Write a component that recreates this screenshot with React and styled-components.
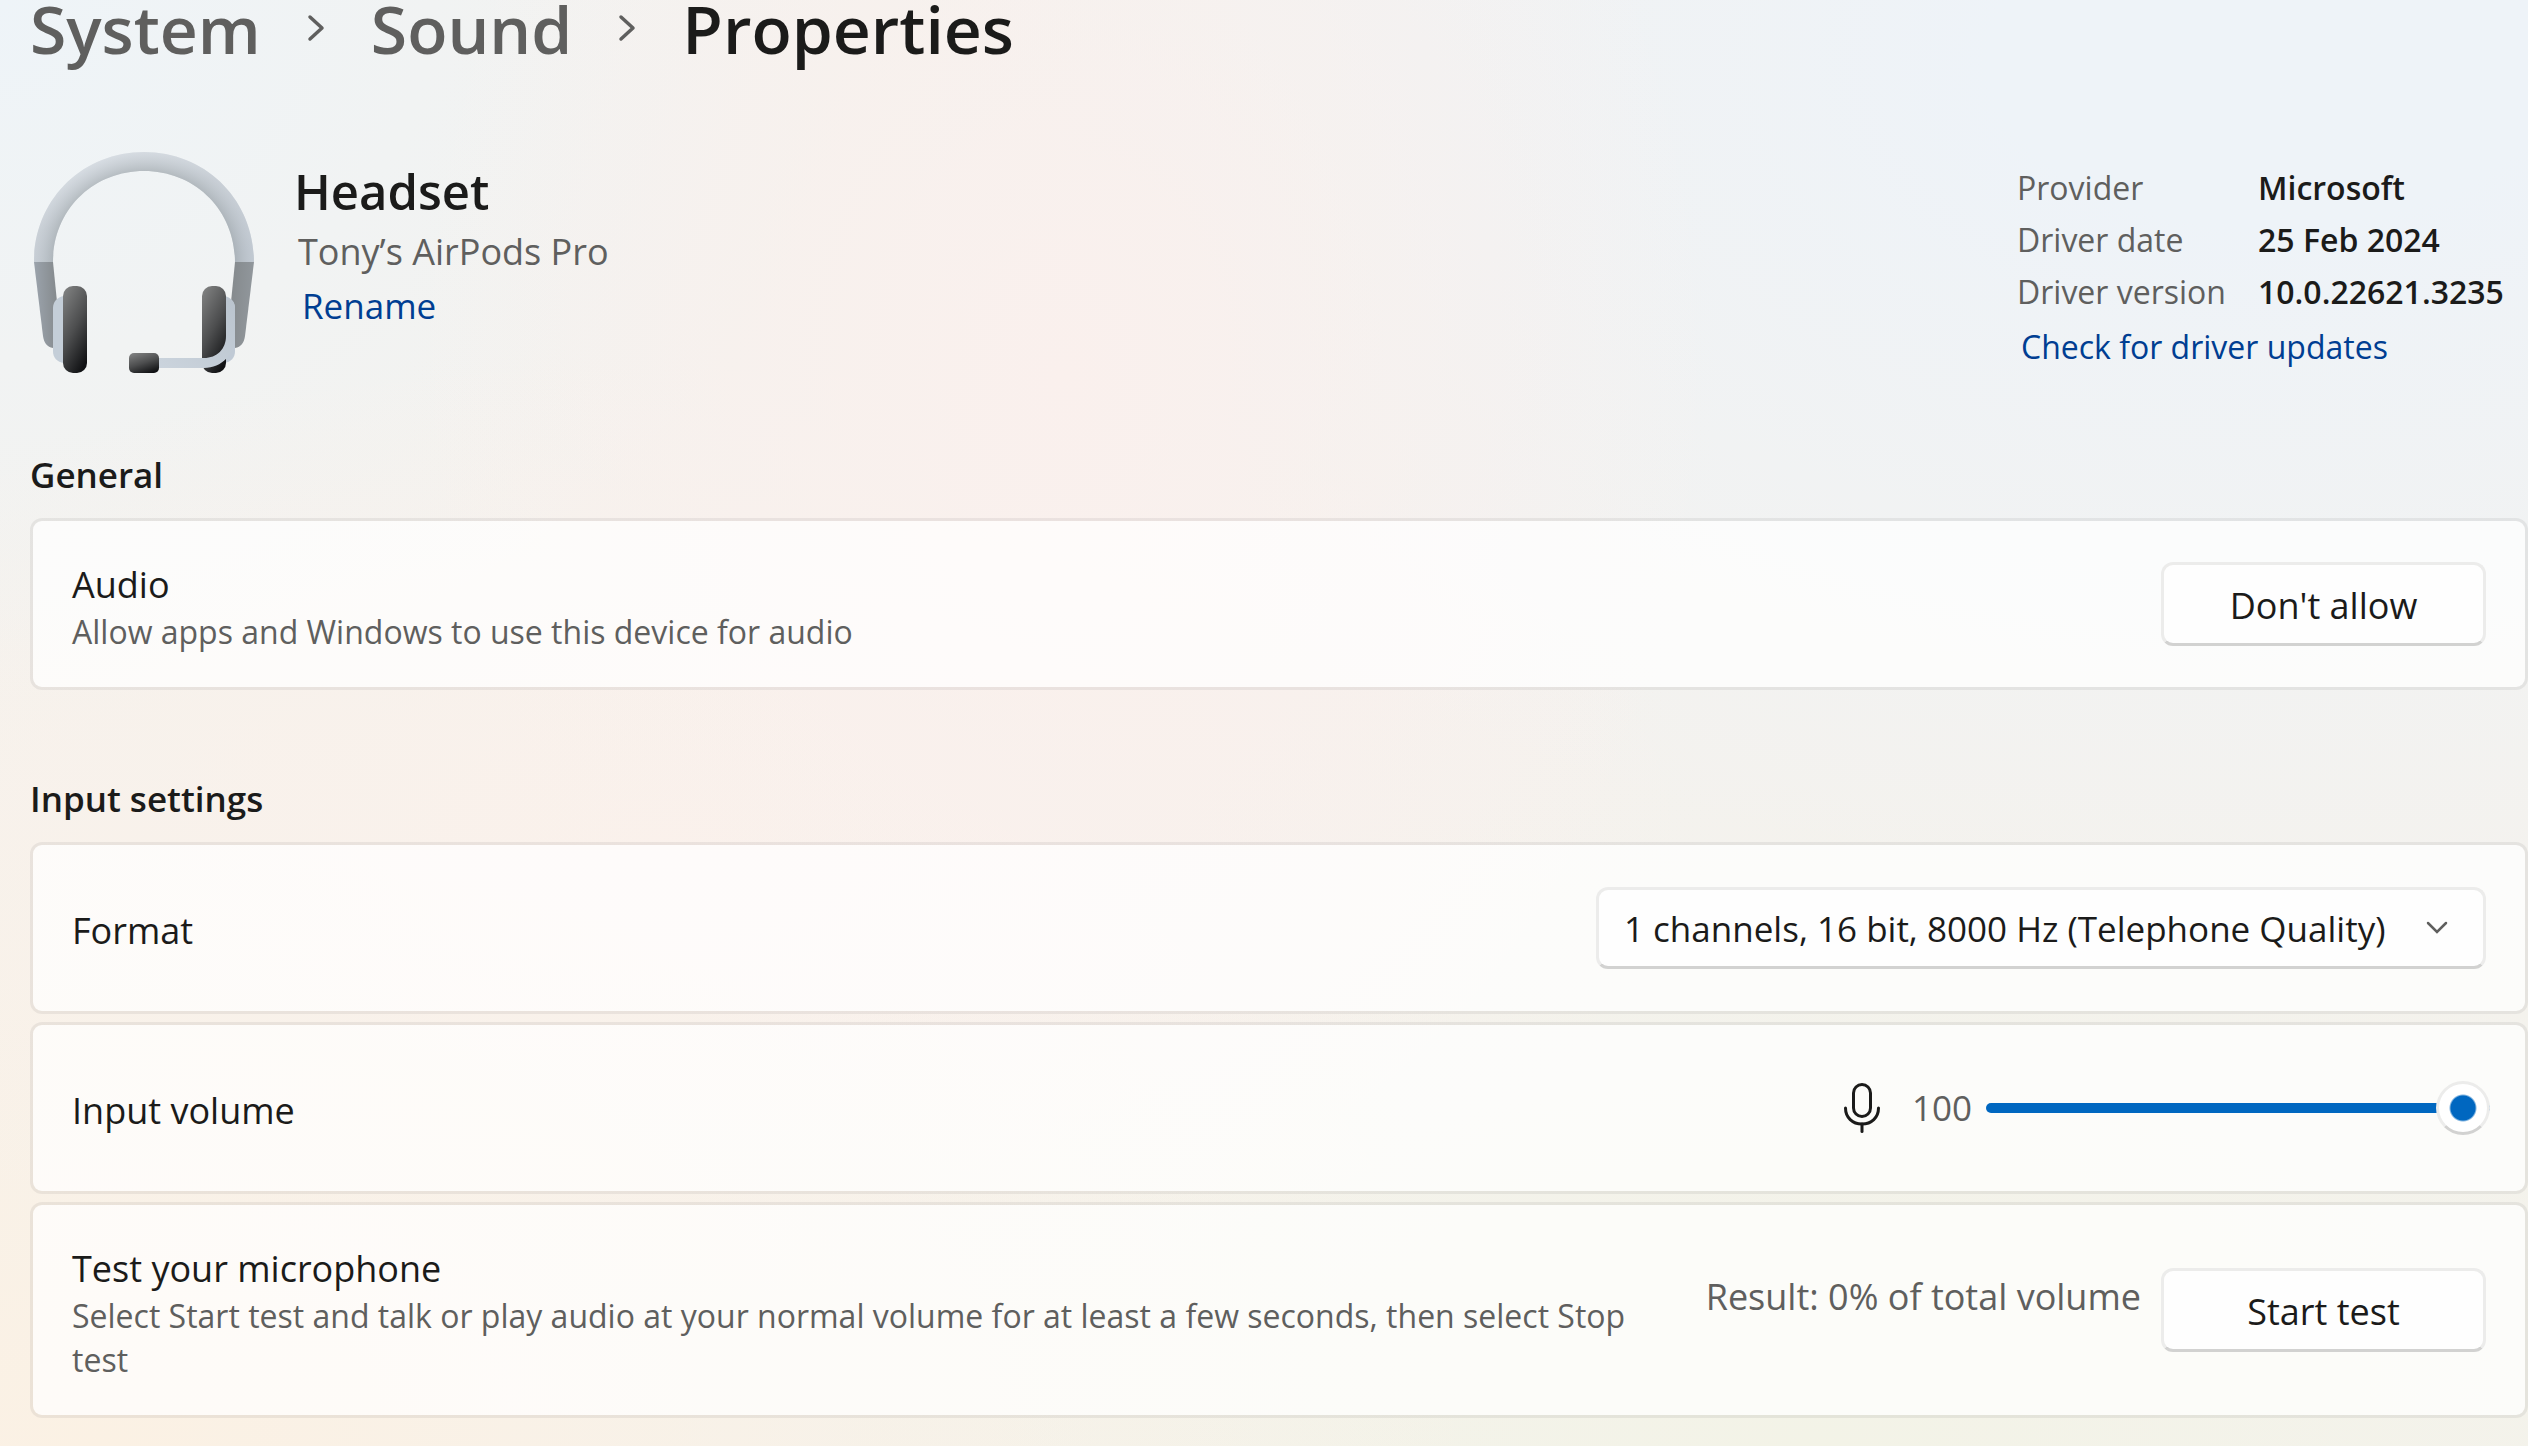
import { useState } from "react";
import styled, { createGlobalStyle } from "styled-components";

const GlobalStyle = createGlobalStyle`
  :root {
    --text: #1b1b1a;
    --text-muted: #5f5f5e;
    --link: #003e92;
    --accent: #0067c0;
    --control-border: #ececeb;
    --control-border-bottom: #d2d2d1;
  }

  * {
    box-sizing: border-box;
  }

  body {
    margin: 0;
    min-height: 100vh;
    color: var(--text);
    font-family: "Segoe UI", "Open Sans", "Noto Sans", sans-serif;
    font-size: 36px;
    line-height: 50px;
    background-color: #f4f2ee;
    background-image:
      radial-gradient(ellipse 26% 60% at 42% 26%, #faf0ed 0%, #faf0ed00 100%),
      radial-gradient(ellipse 42% 34% at 26% 58%, #faf1eb 0%, #faf1eb00 100%),
      radial-gradient(ellipse 56% 58% at 90% 4%, #eef3f8 0%, #eef3f8 20%, #eef3f800 100%),
      radial-gradient(ellipse 34% 50% at 0% 0%, #eef4f8 0%, #eef4f800 100%),
      radial-gradient(ellipse 56% 60% at 4% 100%, #fbf1e4 0%, #fbf1e400 100%),
      radial-gradient(ellipse 50% 46% at 72% 100%, #f3f3e7 0%, #f3f3e700 100%);
    background-repeat: no-repeat;
  }

  button,
  select {
    font: inherit;
    color: inherit;
  }
`;

const Page = styled.main`
  padding: 0 0 28px 30px;
`;

const Breadcrumb = styled.nav`
  display: flex;
  align-items: center;
  font-size: 66px;
  font-weight: 600;
  line-height: 56px;

  a {
    color: var(--text-muted);
    text-decoration: none;
  }

  h1 {
    margin: 0;
    font: inherit;
  }

  svg {
    margin: 0 45px;
  }
`;

const DeviceHeader = styled.header`
  display: flex;
  justify-content: space-between;
  align-items: flex-start;
  padding: 96px 0 0 4px;
`;

const Device = styled.div`
  display: flex;
  gap: 40px;
`;

const DeviceText = styled.div`
  display: flex;
  flex-direction: column;
  align-items: flex-start;
  padding-top: 7px;
  line-height: 54px;

  h2 {
    margin: 0 0 2px;
    font-size: 49px;
    font-weight: 600;
    line-height: 64px;
  }

  p {
    margin: 0;
    padding-left: 4px;
    color: var(--text-muted);
  }
`;

const TextLink = styled.a`
  padding-left: 4px;
  color: var(--link);
  text-decoration: none;

  ${DeviceText} & {
    padding-left: 8px;
    font-size: 35px;
  }
`;

const DriverInfo = styled.div`
  padding-top: 10px;
  font-size: 32px;
  line-height: 58px;
`;

const DriverList = styled.dl`
  display: grid;
  grid-template-columns: 241px 270px;
  margin: 0;
  line-height: 52px;

  dt {
    color: var(--text-muted);
  }

  dd {
    margin: 0;
    font-weight: 600;
  }
`;

const Section = styled.section`
  display: flex;
  flex-direction: column;
  gap: 8px;
  padding-top: ${(props) => (props.$first ? "74px" : "84px")};

  > h3 {
    margin: 0 0 10px;
    font-size: 35px;
    font-weight: 600;
  }
`;

const Card = styled.div`
  display: flex;
  align-items: center;
  justify-content: space-between;
  gap: 48px;
  min-height: 172px;
  padding: 33px 39px;
  border: 3px solid rgba(0, 0, 0, 0.06);
  border-radius: 12px;
  background-color: rgba(255, 255, 255, 0.73);
  background-clip: padding-box;
`;

const CardText = styled.div`
  padding-top: 6px;

  label,
  h4 {
    display: block;
    margin: 0;
    font-weight: 400;
  }

  p {
    margin: 0;
    color: var(--text-muted);
    font-size: 32px;
    line-height: 44px;
  }
`;

const Button = styled.button`
  flex: none;
  width: 325px;
  height: 84px;
  padding: 4px 0 0;
  border: 3px solid var(--control-border);
  border-bottom-color: var(--control-border-bottom);
  border-radius: 12px;
  background: #fefefe;
`;

const SelectWrapper = styled.div`
  position: relative;
  flex: none;

  select {
    appearance: none;
    width: 890px;
    height: 82px;
    padding: 2px 80px 0 25px;
    border: 3px solid var(--control-border);
    border-bottom-color: var(--control-border-bottom);
    border-radius: 12px;
    background: #fefefe;
    font-size: 35px;
  }

  svg {
    position: absolute;
    top: 34px;
    right: 37px;
    pointer-events: none;
  }
`;

const VolumeControl = styled.div`
  display: flex;
  flex: none;
  align-items: center;

  output {
    margin: 0 14px 0 32px;
    color: var(--text-muted);
    font-size: 35px;
  }
`;

const Slider = styled.input`
  appearance: none;
  width: 504px;
  height: 54px;
  margin: 0 -4px 0 0;
  background: transparent;

  &::-webkit-slider-runnable-track {
    height: 10px;
    border-radius: 5px;
    background: linear-gradient(
      to right,
      var(--accent) ${(props) => props.$percent}%,
      #868686 ${(props) => props.$percent}%
    );
  }

  &::-webkit-slider-thumb {
    appearance: none;
    width: 54px;
    height: 54px;
    margin-top: -22px;
    border: 3px solid var(--control-border);
    border-bottom-color: var(--control-border-bottom);
    border-radius: 50%;
    background: radial-gradient(circle, var(--accent) 12px, #ffffff 14px);
  }
`;

const TestControl = styled.div`
  display: flex;
  flex: none;
  gap: 20px;

  output {
    color: var(--text-muted);
    line-height: 58px;
  }
`;

const CrumbArrow = () => (
  <svg width="20" height="30" viewBox="0 0 20 30" fill="none" aria-hidden="true">
    <path
      d="M4 4L16 15L4 26"
      stroke="#5f5f5e"
      strokeWidth="3.5"
      strokeLinecap="round"
      strokeLinejoin="round"
    />
  </svg>
);

const SelectArrow = () => (
  <svg width="24" height="16" viewBox="0 0 24 16" fill="none" aria-hidden="true">
    <path d="M3 2L12 11L21 2" stroke="#5f5f5e" strokeWidth="2.5" strokeLinecap="round" />
  </svg>
);

const MicIcon = () => (
  <svg width="36" height="50" viewBox="0 0 36 50" fill="none" aria-hidden="true">
    <g stroke="#1b1b1a" strokeWidth="3" strokeLinecap="round">
      <rect x="9.5" y="1.5" width="17" height="32" rx="8.5" />
      <path d="M1.5 25C1.5 34.5 8.5 41 18 41C27.5 41 34.5 34.5 34.5 25" />
      <path d="M18 41V48.5" />
    </g>
  </svg>
);

const HeadsetIcon = () => (
  <svg width="220" height="221" viewBox="0 0 220 221" aria-hidden="true">
    <defs>
      <linearGradient id="band" x1="0.2" y1="0" x2="0.8" y2="1">
        <stop offset="0" stopColor="#dce1e6" />
        <stop offset="0.45" stopColor="#c5cbd1" />
        <stop offset="1" stopColor="#b9c1ca" />
      </linearGradient>
      <radialGradient id="bandShade" gradientUnits="userSpaceOnUse" cx="110" cy="110" r="110">
        <stop offset="0.82" stopColor="#9da5a9" stopOpacity="0.55" />
        <stop offset="1" stopColor="#d5dce4" stopOpacity="0.3" />
      </radialGradient>
      <linearGradient id="arm" x1="0" y1="0.4" x2="1" y2="0.3">
        <stop offset="0" stopColor="#9ca4ad" />
        <stop offset="1" stopColor="#858a8d" />
      </linearGradient>
      <linearGradient id="armRight" x1="0" y1="0.3" x2="1" y2="0.5">
        <stop offset="0" stopColor="#858a8d" />
        <stop offset="1" stopColor="#92989d" />
      </linearGradient>
      <linearGradient id="pad" x1="0.2" y1="0" x2="0.7" y2="1">
        <stop offset="0" stopColor="#7d7e7e" />
        <stop offset="0.5" stopColor="#4d4e4f" />
        <stop offset="1" stopColor="#111214" />
      </linearGradient>
      <linearGradient id="boom" x1="0" y1="1" x2="1" y2="0">
        <stop offset="0" stopColor="#cbd4dd" />
        <stop offset="1" stopColor="#bac4ce" />
      </linearGradient>
    </defs>
    <path
      d="M0 110C0 48 48 0 110 0C172 0 220 48 220 110H201C201 58 161 19 110 19C59 19 19 58 19 110Z"
      fill="url(#band)"
    />
    <path
      d="M0 110C0 48 48 0 110 0C172 0 220 48 220 110H201C201 58 161 19 110 19C59 19 19 58 19 110Z"
      fill="url(#bandShade)"
    />
    <path d="M0 110H19L23 150V196H19C13 195 10 191 9 184Z" fill="url(#arm)" />
    <path d="M220 110H201L197 150V196H201C207 195 210 191 211 184Z" fill="url(#armRight)" />
    <path d="M30 144C23 145 19 150 19 156V199C19 206 23 210 30 211Z" fill="#c4ced8" />
    <path d="M190 144C197 145 201 150 201 156V199C201 206 197 210 190 211Z" fill="#c0cad5" />
    <rect x="29" y="134" width="24" height="87" rx="10" fill="url(#pad)" />
    <rect x="168" y="134" width="24" height="87" rx="10" fill="url(#pad)" />
    <path
      d="M192 145C198 147 201 151 201 156V184C201 202 188 216 170 216H122V206H170C183 206 192 197 192 184Z"
      fill="url(#boom)"
    />
    <rect x="95" y="201" width="30" height="20" rx="5" fill="url(#pad)" />
  </svg>
);

const App = () => {
  const [volume, setVolume] = useState(100);

  return (
    <>
      <GlobalStyle />
      <Page>
        <Breadcrumb aria-label="Breadcrumb">
          <a href="#system">System</a>
          <CrumbArrow />
          <a href="#sound">Sound</a>
          <CrumbArrow />
          <h1>Properties</h1>
        </Breadcrumb>

        <DeviceHeader>
          <Device>
            <HeadsetIcon />
            <DeviceText>
              <h2>Headset</h2>
              <p>Tony’s AirPods Pro</p>
              <TextLink href="#rename">Rename</TextLink>
            </DeviceText>
          </Device>
          <DriverInfo>
            <DriverList>
              <dt>Provider</dt>
              <dd>Microsoft</dd>
              <dt>Driver date</dt>
              <dd>25 Feb 2024</dd>
              <dt>Driver version</dt>
              <dd>10.0.22621.3235</dd>
            </DriverList>
            <TextLink href="#updates">Check for driver updates</TextLink>
          </DriverInfo>
        </DeviceHeader>

        <Section $first>
          <h3>General</h3>
          <Card>
            <CardText>
              <h4>Audio</h4>
              <p>Allow apps and Windows to use this device for audio</p>
            </CardText>
            <Button type="button">Don't allow</Button>
          </Card>
        </Section>

        <Section>
          <h3>Input settings</h3>
          <Card>
            <CardText>
              <label htmlFor="format">Format</label>
            </CardText>
            <SelectWrapper>
              <select id="format">
                <option>1 channels, 16 bit, 8000 Hz (Telephone Quality)</option>
              </select>
              <SelectArrow />
            </SelectWrapper>
          </Card>
          <Card>
            <CardText>
              <label htmlFor="volume">Input volume</label>
            </CardText>
            <VolumeControl>
              <MicIcon />
              <output htmlFor="volume">{volume}</output>
              <Slider
                id="volume"
                type="range"
                min="0"
                max="100"
                value={volume}
                $percent={volume}
                onChange={(e) => setVolume(Number(e.target.value))}
              />
            </VolumeControl>
          </Card>
          <Card>
            <CardText>
              <h4>Test your microphone</h4>
              <p>
                Select Start test and talk or play audio at your normal volume for at least a few
                seconds, then select Stop test
              </p>
            </CardText>
            <TestControl>
              <output>Result: 0% of total volume</output>
              <Button type="button">Start test</Button>
            </TestControl>
          </Card>
        </Section>
      </Page>
    </>
  );
};

export default App;
